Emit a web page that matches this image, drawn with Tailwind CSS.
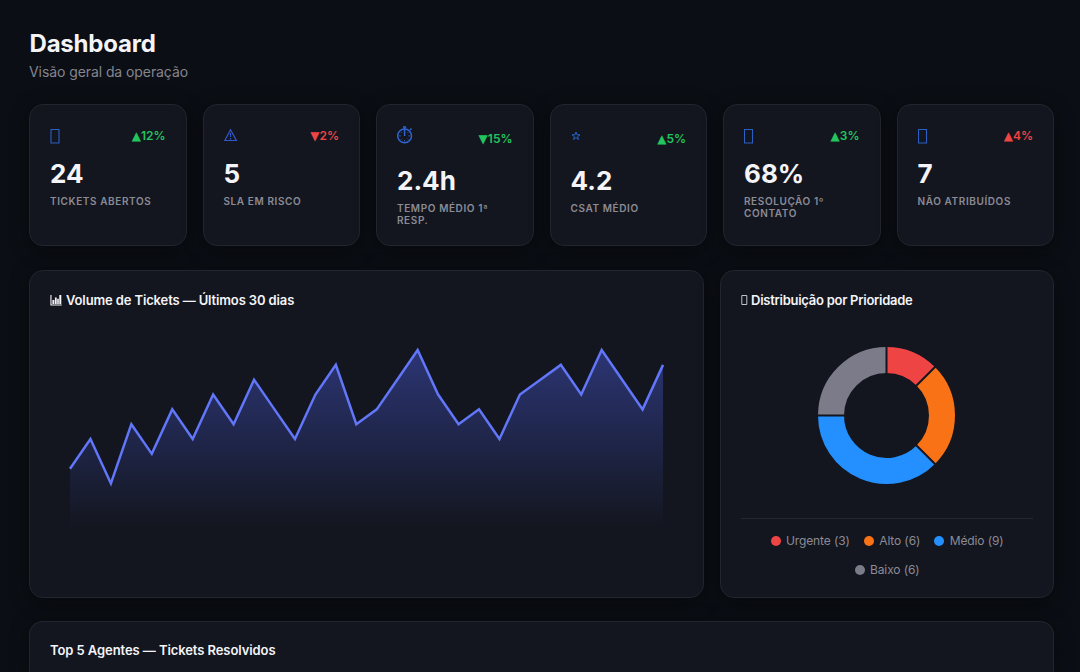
<!doctype html>
<html lang="pt-BR">
  <head>
    <meta charset="UTF-8" />
    <meta name="viewport" content="width=device-width, initial-scale=1.0" />
    <title>Dashboard</title>
    <script src="https://cdn.jsdelivr.net/npm/@tailwindcss/browser@4"></script>
  </head>
  <body
    class="h-screen overflow-hidden bg-[#0b0e14] font-['Inter',sans-serif] text-[#f4f4f8]"
  >
    <main class="flex h-screen w-[1054px] flex-col pl-[29px] pt-[29px]">
      <header class="h-[74.5px] shrink-0">
        <h1 class="pl-[0.5px] text-2xl leading-[29px] font-bold tracking-[-0.2px]">Dashboard</h1>
        <p class="mt-[5px] text-sm leading-[17px] tracking-[-0.08px] text-[#85858f]">
          Visão geral da operação
        </p>
      </header>

      <!-- stats -->
      <section class="grid h-[142.5px] shrink-0 grid-cols-6 gap-4">
        <div class="rounded-[14px] border border-[#22252d] bg-[#13161f] px-5 pt-[21px] shadow-[0_4px_20px_rgba(0,0,0,0.4)]">
          <div class="flex h-5 items-center justify-between">
            <svg class="h-5 w-5" viewBox="0 0 20 20" fill="none" stroke="#2a5fc4" stroke-width="1.1">
              <path d="M1 3.5h8v13.5H1z" />
            </svg>
            <span class="text-xs font-semibold text-[#22c55e]"><span class="font-['DejaVu_Sans'] font-normal">▲</span>12%</span>
          </div>
          <div class="mt-3 text-[26px] leading-8 font-bold">24</div>
          <div class="mt-[5px] text-[10px] leading-3 font-semibold tracking-[0.6px] text-[#8b8b96]">TICKETS ABERTOS</div>
        </div>
        <div class="rounded-[14px] border border-[#22252d] bg-[#13161f] px-5 pt-[21px] shadow-[0_4px_20px_rgba(0,0,0,0.4)]">
          <div class="flex h-5 items-center justify-between">
            <svg class="h-5 w-5" viewBox="0 0 20 20" fill="none" stroke="#3458cc" stroke-width="1.2">
              <path d="M6.5 3.8.8 14.5h11.6L6.5 3.8ZM6.5 7v4M6.5 12v1.5" />
            </svg>
            <span class="text-xs font-semibold text-[#ef4444]"><span class="font-['DejaVu_Sans'] font-normal">▼</span>2%</span>
          </div>
          <div class="mt-3 text-[26px] leading-8 font-bold">5</div>
          <div class="mt-[5px] text-[10px] leading-3 font-semibold tracking-[0.6px] text-[#8b8b96]">SLA EM RISCO</div>
        </div>
        <div class="rounded-[14px] border border-[#22252d] bg-[#13161f] px-5 pt-[21px] shadow-[0_4px_20px_rgba(0,0,0,0.4)]">
          <div class="flex h-[27px] items-center justify-between">
            <svg class="h-[27px] w-5" viewBox="0 0 20 27" fill="none" stroke="#2f63d0">
              <circle cx="7.6" cy="9.9" r="6.9" stroke-width="1.5" />
              <path d="M6 1h3.2M7.6 1v9M13 4l1.5-1.5" stroke-width="1.5" />
              <path d="M2.3 9.9h1.4M11.5 9.9h1.4M7.6 14v1.4M4 13.5l.8-.8M11.2 13.5l-.8-.8M4 6.3l.8.8M11.2 6.3l-.8.8" />
            </svg>
            <span class="text-xs font-semibold text-[#22c55e]"><span class="font-['DejaVu_Sans'] font-normal">▼</span>15%</span>
          </div>
          <div class="mt-3 text-[26px] leading-8 font-bold">2.4h</div>
          <div class="mt-[5px] text-[10px] leading-3 font-semibold tracking-[0.6px] text-[#8b8b96]">TEMPO MÉDIO 1ª RESP.</div>
        </div>
        <div class="rounded-[14px] border border-[#22252d] bg-[#13161f] px-5 pt-[21px] shadow-[0_4px_20px_rgba(0,0,0,0.4)]">
          <div class="flex h-[27px] items-center justify-between">
            <svg class="h-[27px] w-5" viewBox="0 0 20 27" fill="none" stroke="#2563c8">
              <path d="M5 6l1 2.8h3l-2.4 1.8.9 2.9L5 11.7l-2.5 1.8.9-2.9L1 8.8h3z" />
            </svg>
            <span class="text-xs font-semibold text-[#22c55e]"><span class="font-['DejaVu_Sans'] font-normal">▲</span>5%</span>
          </div>
          <div class="mt-3 text-[26px] leading-8 font-bold">4.2</div>
          <div class="mt-[5px] text-[10px] leading-3 font-semibold tracking-[0.6px] text-[#8b8b96]">CSAT MÉDIO</div>
        </div>
        <div class="rounded-[14px] border border-[#22252d] bg-[#13161f] px-5 pt-[21px] shadow-[0_4px_20px_rgba(0,0,0,0.4)]">
          <div class="flex h-5 items-center justify-between">
            <svg class="h-5 w-5" viewBox="0 0 20 20" fill="none" stroke="#2a5fc4" stroke-width="1.1">
              <path d="M.5 3.5h8v13.5h-8z" />
            </svg>
            <span class="text-xs font-semibold text-[#22c55e]"><span class="font-['DejaVu_Sans'] font-normal">▲</span>3%</span>
          </div>
          <div class="mt-3 text-[26px] leading-8 font-bold">68%</div>
          <div class="mt-[5px] text-[10px] leading-3 font-semibold tracking-[0.6px] text-[#8b8b96]">RESOLUÇÃO 1º CONTATO</div>
        </div>
        <div class="rounded-[14px] border border-[#22252d] bg-[#13161f] px-5 pt-[21px] shadow-[0_4px_20px_rgba(0,0,0,0.4)]">
          <div class="flex h-5 items-center justify-between">
            <svg class="h-5 w-5" viewBox="0 0 20 20" fill="none" stroke="#2a5fc4" stroke-width="1.1">
              <path d="M.5 3.5h8v13.5h-8z" />
            </svg>
            <span class="text-xs font-semibold text-[#ef4444]"><span class="font-['DejaVu_Sans'] font-normal">▲</span>4%</span>
          </div>
          <div class="mt-3 text-[26px] leading-8 font-bold">7</div>
          <div class="mt-[5px] text-[10px] leading-3 font-semibold tracking-[0.6px] text-[#8b8b96]">NÃO ATRIBUÍDOS</div>
        </div>
      </section>

      <!-- charts -->
      <section class="mt-6 grid h-[328px] shrink-0 grid-cols-[675px_334px] gap-4">
        <div class="rounded-[14px] border border-[#22252d] bg-[#13161f] px-5 pt-5 shadow-[0_4px_20px_rgba(0,0,0,0.4)]">
          <h2 class="flex items-center gap-1 text-[13px] leading-[18px] font-semibold tracking-[-0.13px]">
            <svg class="h-3 w-3" viewBox="0 0 12 12" fill="currentColor">
              <path d="M.4 1h1.1v9.5h10.2v1.1H.4zM2.4 6h1.9v4H2.4zM4.9 3.5h1.8V10H4.9zM7.2 4.8h1.6V10H7.2zM9.3 1h2v9h-2z" />
            </svg>
            Volume de Tickets — Últimos 30 dias
          </h2>
          <svg class="mt-[21px] h-[220px] w-[633px]" viewBox="50 330 633 220" fill="none">
            <defs>
              <linearGradient id="area" x1="0" y1="350" x2="0" y2="528" gradientUnits="userSpaceOnUse">
                <stop stop-color="#5468ff" stop-opacity="0.38" />
                <stop offset="1" stop-color="#5468ff" stop-opacity="0" />
              </linearGradient>
            </defs>
            <path id="volume-area" fill="url(#area)" />
            <path id="volume-line" stroke="#6176f8" stroke-width="2.5" />
          </svg>
        </div>

        <div class="rounded-[14px] border border-[#22252d] bg-[#13161f] px-5 pt-5 shadow-[0_4px_20px_rgba(0,0,0,0.4)]">
          <h2 class="flex items-center gap-[3px] text-[13px] leading-[18px] font-semibold tracking-[-0.26px]">
            <svg class="h-3 w-[7px]" viewBox="0 0 7 12" fill="none" stroke="#d4d4dc" stroke-width="0.9">
              <path d="M.8 1.5h5v9h-5z" />
            </svg>
            Distribuição por Prioridade
          </h2>
          <svg class="mx-auto mt-9 h-[140px] w-[140px]" viewBox="-69.5 -70.5 140 140" fill="none">
            <g stroke-width="26">
              <path d="M0-55.5A55.5 55.5 0 0 1 39.24-39.24" stroke="#ef4444" />
              <path d="M39.24-39.24A55.5 55.5 0 0 1 39.24 39.24" stroke="#f97316" />
              <path d="M39.24 39.24A55.5 55.5 0 0 1-55.5 0" stroke="#2490ff" />
              <path d="M-55.5 0A55.5 55.5 0 0 1 0-55.5" stroke="#7c7b8a" />
            </g>
            <path d="M0-42V-70M29-29L50-50M29 29L50 50M-42 0H-70" stroke="#13161f" stroke-width="2" />
          </svg>
          <div class="mt-[33px] flex flex-wrap justify-center gap-x-[14px] gap-y-[13px] border-t border-[#252830] pt-[14px] text-xs leading-4 tracking-[-0.12px] text-[#8b8b96]">
            <span class="flex items-center gap-[5.5px]"><i class="size-[10px] rounded-full bg-[#ef4444]"></i>Urgente (3)</span>
            <span class="flex items-center gap-[5.5px]"><i class="size-[10px] rounded-full bg-[#f97316]"></i>Alto (6)</span>
            <span class="flex items-center gap-[5.5px]"><i class="size-[10px] rounded-full bg-[#2490ff]"></i>Médio (9)</span>
            <span class="flex items-center gap-[5.5px]"><i class="size-[10px] rounded-full bg-[#7c7b8a]"></i>Baixo (6)</span>
          </div>
        </div>
      </section>

      <section class="mt-[23.4px] flex-1 rounded-t-[14px] border border-b-0 border-[#22252d] bg-[#13161f] px-5 pt-[19px] shadow-[0_4px_20px_rgba(0,0,0,0.4)]">
        <h2 class="text-[13px] leading-[18px] font-semibold tracking-[-0.08px]">Top 5 Agentes — Tickets Resolvidos</h2>
      </section>
    </main>

    <script>
      // tickets per day, last 30 days
      const volume = [
        4, 6, 3, 7, 5, 8, 6, 9, 7, 10, 8, 6, 9, 11, 7, 8, 10, 12, 9, 7, 8, 6, 9,
        10, 11, 9, 12, 10, 8, 11,
      ];
      const points = volume.map((v, i) => `${70 + i * 20.45} ${528 - v * 14.83}`);
      const line = "M" + points.join("L");
      document.querySelector("#volume-line").setAttribute("d", line);
      document
        .querySelector("#volume-area")
        .setAttribute("d", line + "V528H70Z");
    </script>
  </body>
</html>
